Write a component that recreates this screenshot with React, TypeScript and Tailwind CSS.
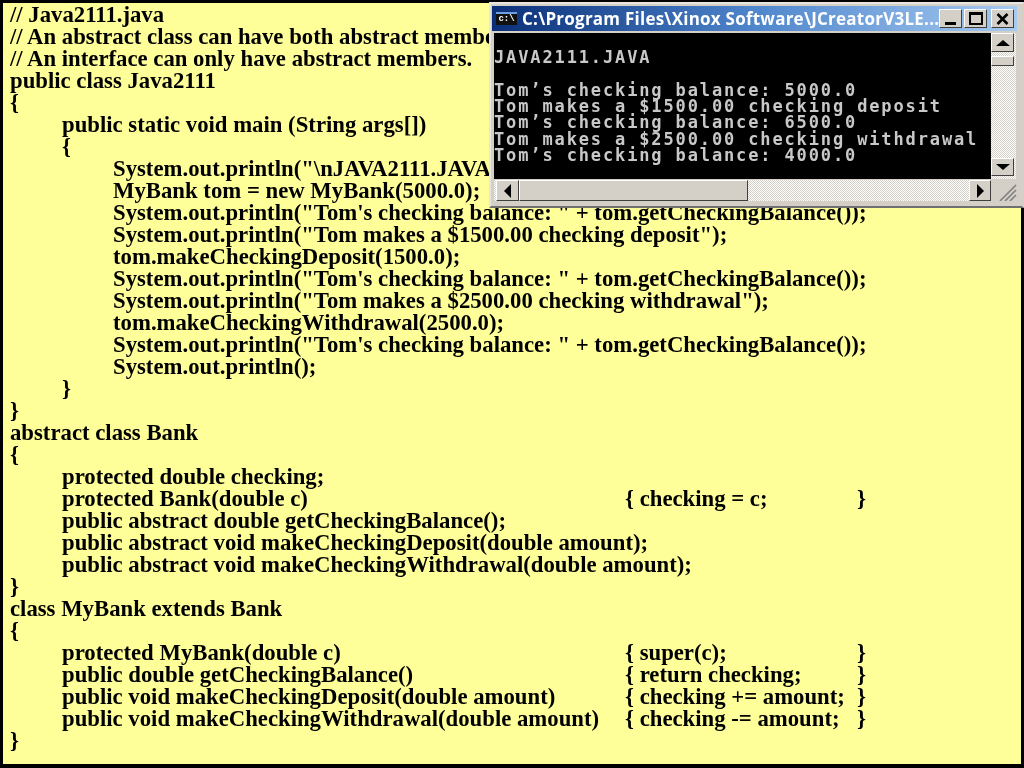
import React from 'react';

type Line = { indent?: number; text: string; col2?: string; col3?: string };

const lines: Line[] = [
  { text: '// Java2111.java' },
  { text: '// An abstract class can have both abstract members and concrete members.' },
  { text: '// An interface can only have abstract members.' },
  { text: 'public class Java2111' },
  { text: '{' },
  { indent: 1, text: 'public static void main (String args[])' },
  { indent: 1, text: '{' },
  { indent: 2, text: 'System.out.println("\\nJAVA2111.JAVA\\n");' },
  { indent: 2, text: 'MyBank tom = new MyBank(5000.0);' },
  { indent: 2, text: 'System.out.println("Tom\'s checking balance: " + tom.getCheckingBalance());' },
  { indent: 2, text: 'System.out.println("Tom makes a $1500.00 checking deposit");' },
  { indent: 2, text: 'tom.makeCheckingDeposit(1500.0);' },
  { indent: 2, text: 'System.out.println("Tom\'s checking balance: " + tom.getCheckingBalance());' },
  { indent: 2, text: 'System.out.println("Tom makes a $2500.00 checking withdrawal");' },
  { indent: 2, text: 'tom.makeCheckingWithdrawal(2500.0);' },
  { indent: 2, text: 'System.out.println("Tom\'s checking balance: " + tom.getCheckingBalance());' },
  { indent: 2, text: 'System.out.println();' },
  { indent: 1, text: '}' },
  { text: '}' },
  { text: 'abstract class Bank' },
  { text: '{' },
  { indent: 1, text: 'protected double checking;' },
  { indent: 1, text: 'protected Bank(double c)', col2: '{ checking = c;', col3: '}' },
  { indent: 1, text: 'public abstract double getCheckingBalance();' },
  { indent: 1, text: 'public abstract void makeCheckingDeposit(double amount);' },
  { indent: 1, text: 'public abstract void makeCheckingWithdrawal(double amount);' },
  { text: '}' },
  { text: 'class MyBank extends Bank' },
  { text: '{' },
  { indent: 1, text: 'protected MyBank(double c)', col2: '{ super(c);', col3: '}' },
  { indent: 1, text: 'public double getCheckingBalance()', col2: '{ return checking;', col3: '}' },
  { indent: 1, text: 'public void makeCheckingDeposit(double amount)', col2: '{ checking += amount;', col3: '}' },
  { indent: 1, text: 'public void makeCheckingWithdrawal(double amount)', col2: '{ checking -= amount;', col3: '}' },
  { text: '}' },
];

const consoleLines = [
  '',
  'JAVA2111.JAVA',
  '',
  'Tom’s checking balance: 5000.0',
  'Tom makes a $1500.00 checking deposit',
  'Tom’s checking balance: 6500.0',
  'Tom makes a $2500.00 checking withdrawal',
  'Tom’s checking balance: 4000.0',
];

const raised =
  'bg-[#d4d0c8] border border-t-white border-l-white border-r-[#404040] border-b-[#404040] flex items-center justify-center';

const CodeLine = ({ line }: { line: Line }) => {
  const pad = line.indent === 2 ? 'pl-[103px]' : line.indent === 1 ? 'pl-[52px]' : 'pl-0';
  return (
    <div className={`flex h-[22.03px] leading-[22px] whitespace-pre ${pad}`}>
      <span className={line.col2 ? 'w-[563px] shrink-0' : ''}>{line.text}</span>
      {line.col2 && <span className="w-[232px] shrink-0">{line.col2}</span>}
      {line.col3 && <span>{line.col3}</span>}
    </div>
  );
};

const ConsoleWindow = () => (
  <div className="absolute left-[489px] top-[2px] w-[535px] h-[206px] bg-[#d4d0c8] border-2 border-t-[#e8e6e0] border-l-[#e8e6e0] border-r-[#d4d0c8] border-b-[#707070] pl-[1px] pr-[5px] pt-[2px] flex flex-col blur-[0.5px]">
    <div className="h-[25px] shrink-0 flex items-center pl-[4px] bg-gradient-to-r from-[#0a2f78] via-[#4f86cc] to-[#a6caf0]">
      <div className="w-[21px] h-[13px] bg-[#111] border-t-2 border-t-[#6f9fe0] text-[9px] leading-[10px] text-white font-['Liberation_Mono'] font-bold text-center shrink-0">
        c:\
      </div>
      <span className="ml-[5px] w-[417px] shrink-0 font-['Open_Sans','Liberation_Sans',sans-serif] font-bold text-[17px] tracking-[0.24px] leading-[25px] text-white whitespace-nowrap overflow-hidden">
        C:\Program Files\Xinox Software\JCreatorV3LE...
      </span>
      <div className={`${raised} w-[23px] h-[19px] items-end pb-[2px]`}>
        <div className="w-[11px] h-[3px] bg-black" />
      </div>
      <div className={`${raised} w-[23px] h-[19px] ml-[2px]`}>
        <div className="w-[14px] h-[13px] border-2 border-t-[3px] border-black" />
      </div>
      <div className={`${raised} w-[23px] h-[19px] ml-[4px]`}>
        <svg width="13" height="12" viewBox="0 0 13 12">
          <path d="M1.5 1 L11.5 11 M11.5 1 L1.5 11" stroke="#000" strokeWidth="2.6" />
        </svg>
      </div>
    </div>
    <div className="flex h-[146px] mt-[2px] ml-[2px] mr-[1px] shrink-0">
      <div className="w-[497px] bg-black shrink-0 text-[#c8c8c8] font-['DejaVu_Sans_Mono',monospace] font-bold text-[17px] tracking-[1.87px] leading-[16.3px] whitespace-pre overflow-hidden">
        {consoleLines.map((l, i) => (
          <div key={i} className="h-[16.3px]">
            {l}
          </div>
        ))}
      </div>
      <div className="w-[25px] shrink-0 pr-[2px] flex flex-col bg-[repeating-conic-gradient(#ffffff_0_25%,#d4d0c8_0_50%)] bg-[length:2px_2px]">
        <div className={`${raised} h-[19px]`}>
          <div className="w-0 h-0 border-x-[7px] border-x-transparent border-b-[6px] border-b-black" />
        </div>
        <div className={`${raised} h-[10px] mt-[4px]`} />
        <div className="flex-1" />
        <div className={`${raised} h-[18px] mb-[3px]`}>
          <div className="w-0 h-0 border-x-[7px] border-x-transparent border-t-[6px] border-t-black" />
        </div>
      </div>
    </div>
    <div className="flex h-[21px] mt-[1px] ml-[2px] shrink-0">
      <div className="flex flex-1 bg-[repeating-conic-gradient(#ffffff_0_25%,#d4d0c8_0_50%)] bg-[length:2px_2px]">
        <div className={`${raised} w-[23px] ml-[2px]`}>
          <div className="w-0 h-0 border-y-[7px] border-y-transparent border-r-[7px] border-r-black" />
        </div>
        <div className={`${raised} w-[229px]`} />
        <div className="flex-1" />
        <div className={`${raised} w-[22px]`}>
          <div className="w-0 h-0 border-y-[7px] border-y-transparent border-l-[7px] border-l-black" />
        </div>
      </div>
      <div className="w-[26px] shrink-0 bg-[#d4d0c8] flex items-end justify-end">
        <svg width="22" height="20" viewBox="0 0 22 20">
          <path d="M21 4 L5 20 M21 9 L10 20 M21 14 L15 20" stroke="#808080" strokeWidth="1.6" />
        </svg>
      </div>
    </div>
  </div>
);

export default function App() {
  return (
    <div className="relative w-[1024px] h-[768px] overflow-hidden bg-black p-[3px] pb-[4px]">
      <div className="w-full h-full bg-[#ffff99] pl-[7px] pt-[0.5px] text-black font-['Liberation_Serif',serif] font-bold text-[22.74px] blur-[0.3px]">
        {lines.map((line, i) => (
          <CodeLine key={i} line={line} />
        ))}
      </div>
      <ConsoleWindow />
    </div>
  );
}
